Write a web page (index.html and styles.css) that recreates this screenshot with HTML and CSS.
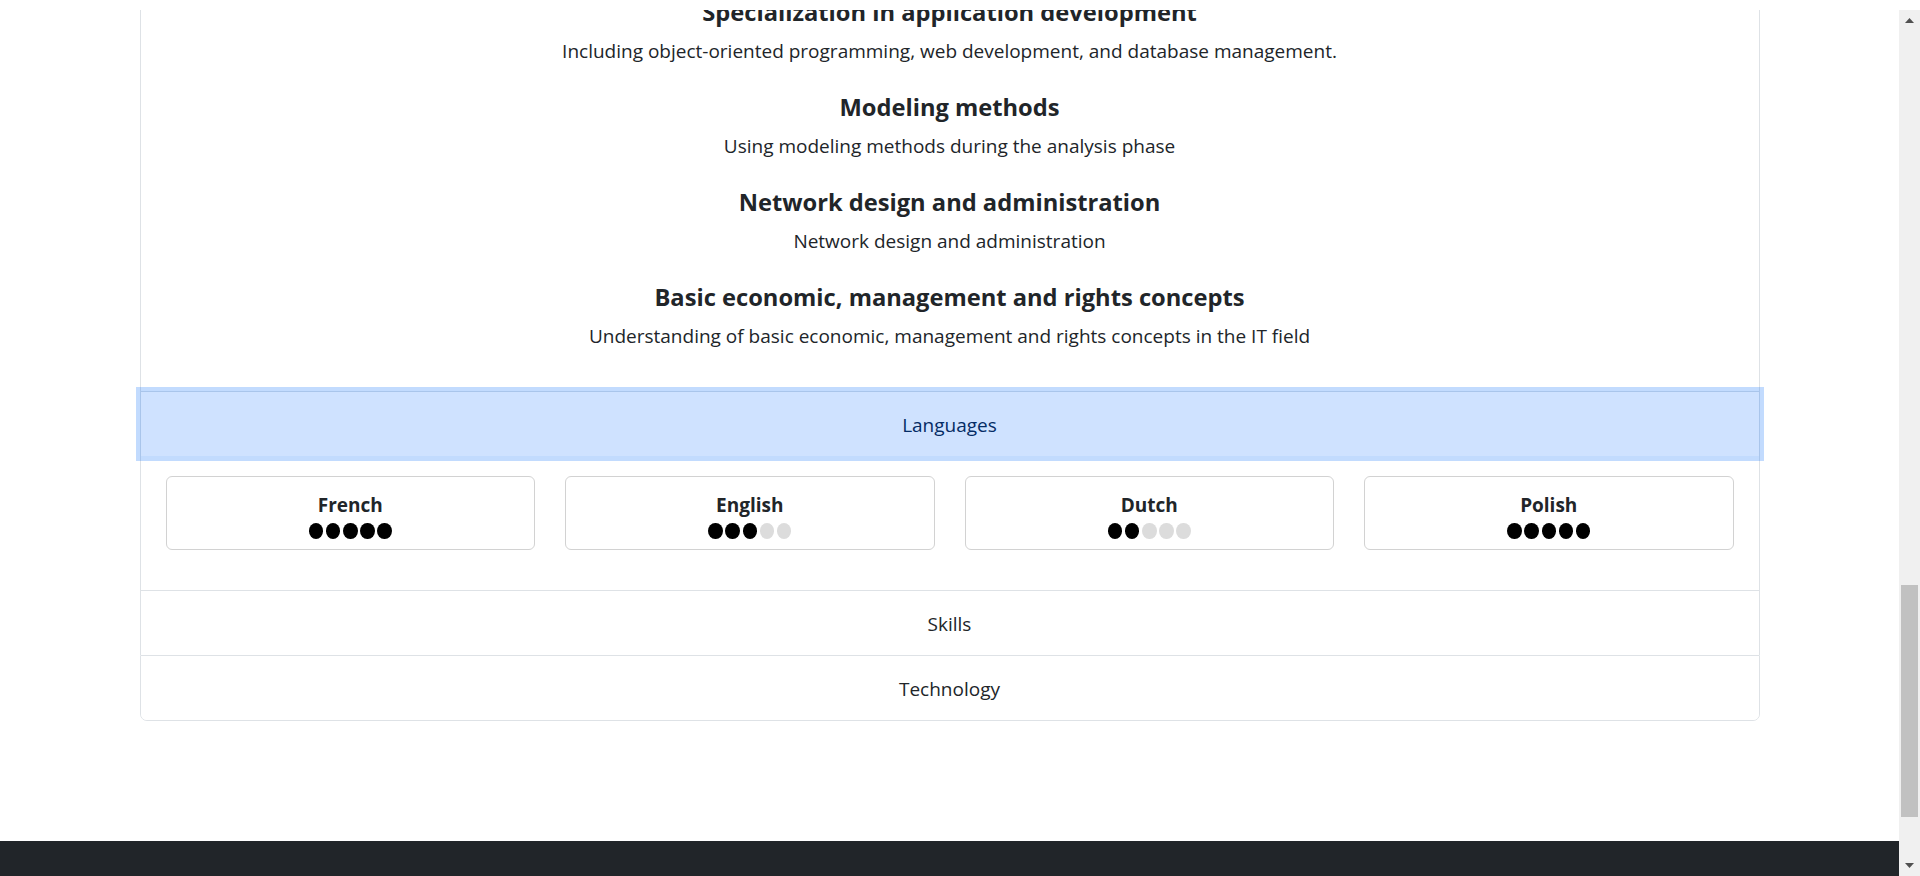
FILE: index.html
```html
<!DOCTYPE html>
<html lang="en">
<head>
<meta charset="utf-8">
<title>Profile</title>
<link rel="stylesheet" href="styles.css">
</head>
<body>
<div class="topstrip"></div>
<div class="window">
  <div class="viewport">
    <div class="scroller">
      <main class="container">
        <div class="accordion">
          <div class="acc-item first">
            <div class="acc-body">
              <div class="topics">
                <div class="topic">
                  <h5 class="topic-title">Specialization in application development</h5>
                  <p class="topic-text">Including object-oriented programming, web development, and database management.</p>
                </div>
                <div class="topic">
                  <h5 class="topic-title">Modeling methods</h5>
                  <p class="topic-text">Using modeling methods during the analysis phase</p>
                </div>
                <div class="topic">
                  <h5 class="topic-title">Network design and administration</h5>
                  <p class="topic-text">Network design and administration</p>
                </div>
                <div class="topic">
                  <h5 class="topic-title">Basic economic, management and rights concepts</h5>
                  <p class="topic-text">Understanding of basic economic, management and rights concepts in the IT field</p>
                </div>
              </div>
            </div>
          </div>
          <div class="acc-item">
            <button class="acc-btn active" type="button">Languages</button>
            <div class="acc-body">
              <div class="lang-row">
                <div class="lang-card">
                  <div class="lang-name">French</div>
                  <div class="dots"><span class="dot on"></span><span class="dot on"></span><span class="dot on"></span><span class="dot on"></span><span class="dot on"></span></div>
                </div>
                <div class="lang-card">
                  <div class="lang-name">English</div>
                  <div class="dots"><span class="dot on"></span><span class="dot on"></span><span class="dot on"></span><span class="dot"></span><span class="dot"></span></div>
                </div>
                <div class="lang-card">
                  <div class="lang-name">Dutch</div>
                  <div class="dots"><span class="dot on"></span><span class="dot on"></span><span class="dot"></span><span class="dot"></span><span class="dot"></span></div>
                </div>
                <div class="lang-card">
                  <div class="lang-name">Polish</div>
                  <div class="dots"><span class="dot on"></span><span class="dot on"></span><span class="dot on"></span><span class="dot on"></span><span class="dot on"></span></div>
                </div>
              </div>
            </div>
          </div>
          <div class="acc-item">
            <button class="acc-btn" type="button">Skills</button>
          </div>
          <div class="acc-item last">
            <button class="acc-btn" type="button">Technology</button>
          </div>
        </div>
      </main>
      <footer class="footer"></footer>
    </div>
  </div>
  <div class="scrollbar">
    <div class="sb-btn">
      <svg width="9" height="5" viewBox="0 0 9 5"><polygon points="0,5 4.5,0 9,5" fill="#505050"/></svg>
    </div>
    <div class="sb-track"><div class="sb-thumb"></div></div>
    <div class="sb-btn">
      <svg width="9" height="5" viewBox="0 0 9 5"><polygon points="0,0 9,0 4.5,5" fill="#505050"/></svg>
    </div>
  </div>
</div>
</body>
</html>
```
FILE: styles.css
```css
* { box-sizing: border-box; }

html, body {
  margin: 0;
  padding: 0;
  background: #fff;
  overflow: hidden;
}

body {
  font-family: "Open Sans", "Noto Sans", sans-serif;
  font-size: 19px;
  line-height: 30px;
  color: #212529;
}

.topstrip {
  height: 10px;
  background: #fff;
}

.window {
  display: flex;
  height: 866px;
}

.viewport {
  flex: 1;
  overflow: hidden;
  height: 866px;
}

.scroller {
  margin-top: -34px;
}

.container {
  width: 1650px;
  margin: 0 auto 120px;
  padding: 0 15px;
}

.accordion {
  background: #fff;
}

.acc-item {
  border-left: 1px solid #dee2e6;
  border-right: 1px solid #dee2e6;
  border-top: 1px solid #dee2e6;
  background: #fff;
}

.acc-item.first {
  border-top: 0;
}

.acc-item.last {
  border-bottom: 1px solid #dee2e6;
  border-radius: 0 0 7px 7px;
}

.acc-body {
  padding: 20px 25px;
}

.topics {
  display: flex;
  flex-direction: column;
  gap: 5px;
}

.topic {
  text-align: center;
}

.topic-title {
  margin: 0 0 9px;
  padding-top: 1px;
  font-size: 23.7px;
  line-height: 30px;
  font-weight: 700;
  color: #212529;
}

.topic-text {
  margin: 0 0 20px;
  padding-top: 1px;
  line-height: 29px;
}

.acc-btn {
  display: block;
  width: 100%;
  height: 64px;
  border: 0;
  margin: 0;
  padding: 2px 25px 0;
  background: #fff;
  font-family: inherit;
  font-size: 19px;
  line-height: 30px;
  color: #212529;
  text-align: center;
  cursor: pointer;
}

.acc-item.last .acc-btn {
  border-radius: 0 0 6px 6px;
}

.acc-btn.active {
  position: relative;
  z-index: 3;
  background: #cfe2ff;
  color: #052c65;
  box-shadow: 0 0 0 5px rgba(13, 110, 253, 0.25);
}

.lang-row {
  display: grid;
  grid-template-columns: repeat(4, 1fr);
  column-gap: 30px;
}

.lang-card {
  border: 1px solid #d2d2d2;
  border-radius: 6px;
  padding: 13px 10px 7px;
  margin-bottom: 20px;
  text-align: center;
}

.lang-name {
  font-weight: 700;
  font-size: 19px;
  line-height: 30px;
  color: #212529;
}

.dots {
  height: 22px;
  display: flex;
  justify-content: center;
  align-items: center;
  gap: 2.7px;
}

.dot {
  width: 14.5px;
  height: 16px;
  border-radius: 50%;
  background: #dcdcdc;
}

.dot.on {
  background: #000;
}

.footer {
  height: 120px;
  background: #212529;
}

.scrollbar {
  width: 21px;
  height: 866px;
  background: #f0f0f0;
  display: flex;
  flex-direction: column;
}

.sb-btn {
  height: 21px;
  display: flex;
  align-items: center;
  justify-content: center;
}

.sb-btn svg { display: block; }

.sb-track {
  flex: 1;
  display: flex;
  flex-direction: column;
  justify-content: flex-end;
  padding: 0 2px 38px;
}

.sb-thumb {
  height: 232px;
  background: #c1c1c1;
}
```
